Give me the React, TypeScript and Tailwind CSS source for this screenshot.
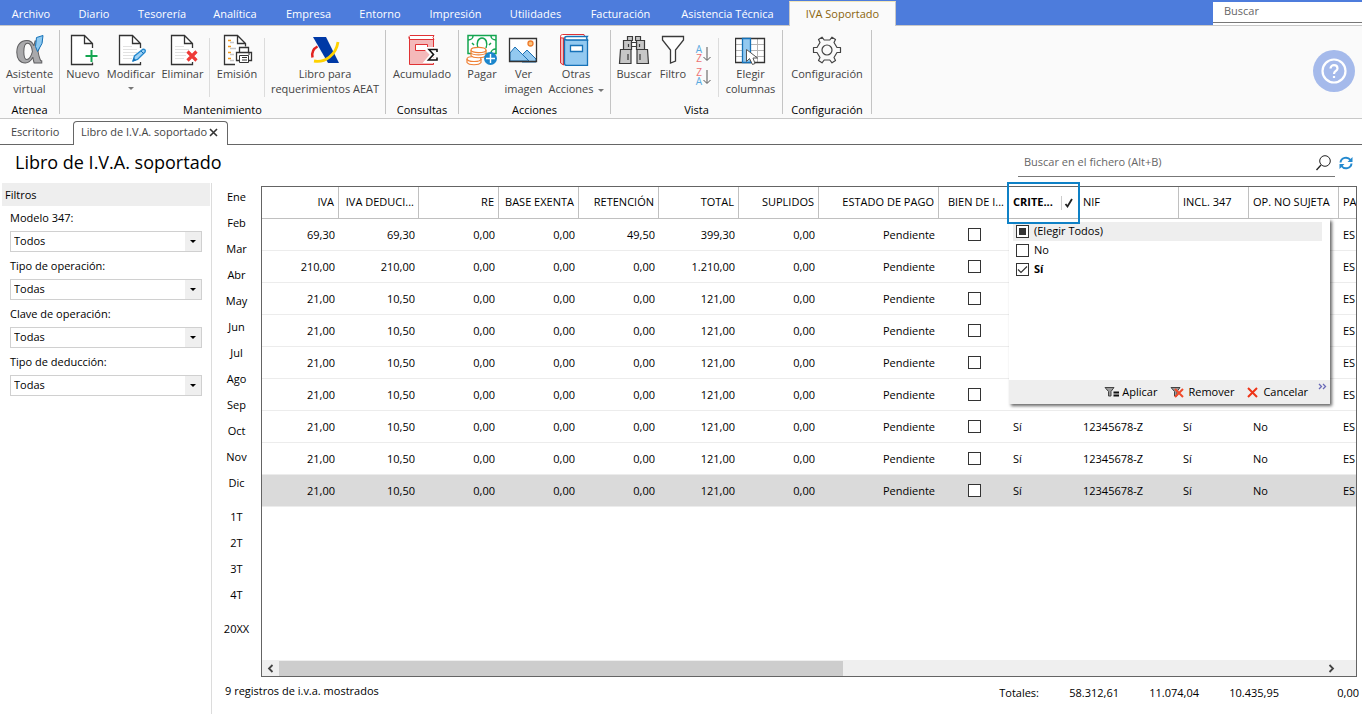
import { ReactNode, useState } from 'react';
import clsx from 'clsx';

const MENU = [
    { label: 'Archivo', width: 'w-[62px]' },
    { label: 'Diario', width: 'w-16' },
    { label: 'Tesorería', width: 'w-[72px]' },
    { label: 'Analítica', width: 'w-[74px]' },
    { label: 'Empresa', width: 'w-[73px]' },
    { label: 'Entorno', width: 'w-[70px]' },
    { label: 'Impresión', width: 'w-[81px]' },
    { label: 'Utilidades', width: 'w-[79px]' },
    { label: 'Facturación', width: 'w-[91px]' },
    { label: 'Asistencia Técnica', width: 'w-[123px]' },
];

const FILTERS = [
    { id: 'modelo', label: 'Modelo 347:', value: 'Todos' },
    { id: 'operacion', label: 'Tipo de operación:', value: 'Todas' },
    { id: 'clave', label: 'Clave de operación:', value: 'Todas' },
    { id: 'deduccion', label: 'Tipo de deducción:', value: 'Todas' },
];

const MONTHS = ['Ene', 'Feb', 'Mar', 'Abr', 'May', 'Jun', 'Jul', 'Ago', 'Sep', 'Oct', 'Nov', 'Dic'];
const QUARTERS = ['1T', '2T', '3T', '4T'];

const COLUMNS = [
    { label: 'IVA', width: 'w-[77px]', right: true },
    { label: 'IVA DEDUCI...', width: 'w-20', right: true },
    { label: 'RE', width: 'w-20', right: true },
    { label: 'BASE EXENTA', width: 'w-20', right: true },
    { label: 'RETENCIÓN', width: 'w-20', right: true },
    { label: 'TOTAL', width: 'w-20', right: true },
    { label: 'SUPLIDOS', width: 'w-20', right: true },
    { label: 'ESTADO DE PAGO', width: 'w-[120px]', right: true },
    { label: 'BIEN DE I...', width: 'w-[70px]', right: true },
    { label: 'CRITE...', width: 'w-[70px]', right: false },
    { label: 'NIF', width: 'w-[100px]', right: false },
    { label: 'INCL. 347', width: 'w-[70px]', right: false },
    { label: 'OP. NO SUJETA', width: 'w-[90px]', right: false },
    { label: 'PA', width: '', right: false },
];

const ROWS = [
    ['69,30', '69,30', '0,00', '0,00', '49,50', '399,30', '0,00'],
    ['210,00', '210,00', '0,00', '0,00', '0,00', '1.210,00', '0,00'],
    ...Array.from({ length: 7 }, () => ['21,00', '10,50', '0,00', '0,00', '0,00', '121,00', '0,00']),
];

const TOTALS = ['58.312,61', '11.074,04', '10.435,95', '0,00'];

/* ---------- Icons ---------- */

function AlphaIcon() {
    return (
        <svg className="overflow-visible" width="32" height="32" viewBox="0 0 32 32">
            <text
                x="1"
                y="29"
                fontFamily="Liberation Serif, serif"
                fontSize="49"
                fontWeight="bold"
                fill="#a9a9ab"
                stroke="#5f5f61"
                strokeWidth="1"
            >
                α
            </text>
            <path d="M22.500 3.500L29 1.500l-1 8-4.500 8-2-5z" fill="#8ec9f0" stroke="#1672b8" />
        </svg>
    );
}

function Page({ lines, children }: { lines?: boolean; children?: ReactNode }) {
    return (
        <svg width="32" height="32" viewBox="0 0 32 32" fill="none">
            <path d="M25.500 30.500H4.500V1.500h13l8 8v21z" fill="#fff" />
            {lines && (
                <path d="M8 12.500h9M8 15.500h14M8 18.500h14M8 21.500h11M8 24.500h9" stroke="#e2e2e2" />
            )}
            <path
                d="M25.500 14V9.500l-8-8h-13v29h21V28M17.500 1.500v8h8"
                stroke="#333"
                strokeWidth="1.300"
            />
            {children}
        </svg>
    );
}

function NewIcon() {
    return (
        <Page>
            <path d="M24.500 15.500v13M18 22h13" stroke="#fff" strokeWidth="5" />
            <path d="M24.500 16v12M18.500 22h12" stroke="#14a550" strokeWidth="2" />
        </Page>
    );
}

function EditIcon() {
    return (
        <Page lines>
            <path d="M18 27l1.500-5 8-6.500c2-1 3.500 1 2.500 2.500l-7.500 7.500z" fill="#9fd2f5" stroke="#2489cf" strokeWidth="1.400" />
            <path d="M18 27l2.500-.8-1.700-1.700zM26 17l2.800 2.800" stroke="#1672b8" fill="#1672b8" />
        </Page>
    );
}

function DeleteIcon() {
    return (
        <Page lines>
            <path d="M20.500 17.500l9 9M29.500 17.500l-9 9" stroke="#fff" strokeWidth="5" />
            <path d="M20.500 17.500l9 9M29.500 17.500l-9 9" stroke="#ee3a37" strokeWidth="3.200" />
        </Page>
    );
}

function PrintIcon() {
    return (
        <svg width="32" height="32" viewBox="0 0 32 32" fill="none" stroke="#333" strokeWidth="1.300">
            <path d="M14 30.500H3.500V1.500h13l8 8v3M16.500 1.500v8h8" fill="#fff" />
            <path d="M7 6.500h3M7 12.500h3M7 18.500h3M7 24.500h3" stroke="#f39a1f" strokeWidth="1.500" />
            <path d="M9 8.500h4M9 14.500h6M9 20.500h4M9 26.500h4" stroke="#c9c9c9" />
            <path d="M18.500 18.500v-5h9v5M18.500 26.500h-3v-8h15v8h-3" fill="#fff" />
            <path d="M18.500 21.500h9v7h-9zM21 23.500h5M21 26h5M27 20h2" fill="#fff" strokeWidth="1" />
        </svg>
    );
}

function AeatIcon() {
    return (
        <svg width="32" height="32" viewBox="0 0 32 32" fill="none">
            <path d="M4 3h13l13 26H19z" fill="#0039a6" />
            <path d="M8.500 12.500c-4 2-6 6-5 11" stroke="#e2231f" strokeWidth="2.500" />
            <path d="M5 27c11 2 22-6 24-19" stroke="#ffd200" strokeWidth="2.800" />
        </svg>
    );
}

function AccumulatedIcon() {
    return (
        <svg width="32" height="32" viewBox="0 0 32 32" fill="none">
            <path d="M3.500 5.500h24v25h-24z" fill="#f4b9ba" stroke="#e03234" />
            <path d="M4 1.500h24l-1 2 1 2H4c-1.500-1-1.500-3 0-4z" fill="#fff" stroke="#e03234" />
            <path d="M3.500 3v27M9.500 10.500h12v6h-12z" stroke="#e03234" fill="#fff" />
            <path d="M31 18v-2.500h-9l5 5-5 6h9V24" stroke="#fff" strokeWidth="5" />
            <path d="M31 18v-2.500h-8l4.500 5-5 5.500h8.500V23.500" stroke="#111" strokeWidth="1.600" />
        </svg>
    );
}

function PayIcon() {
    return (
        <svg width="32" height="32" viewBox="0 0 32 32" fill="none">
            <path d="M2 1.500h28v18H2z" fill="#fff" stroke="#14a550" strokeWidth="1.500" />
            <path
                d="M2 6c3 0 5-2 5-4M30 6c-3 0-5-2-5-4M30 15c-3 0-5 2-5 4M12 14c-2-5 0-10 4-10s6 5 4 10M6 9l2 2M25 9l-2 2"
                stroke="#14a550"
                strokeWidth="1.500"
            />
            <g fill="#fff" stroke="#ef8136" strokeWidth="1.200">
                <path d="M1 25v3.500c2 3 12 3 14 0V25" />
                <ellipse cx="8" cy="25" rx="7" ry="2.500" />
                <path d="M5 16v5.500c2 3 13 3 15 0V16" />
                <path d="M5 19c2 2.500 13 2.500 15 0" />
                <ellipse cx="12.500" cy="16" rx="7.500" ry="2.700" />
            </g>
            <circle cx="24.500" cy="24.500" r="6.500" fill="#1c86cc" />
            <path d="M24.500 20v9M20 24.500h9" stroke="#fff" strokeWidth="1.400" />
        </svg>
    );
}

function PictureIcon() {
    return (
        <svg width="32" height="32" viewBox="1 0 32 32" fill="none">
            <path d="M2.500 4.500h27v23h-27z" fill="#fff" />
            <path d="M15 21l5-5 9 9v3H15z" fill="#93c9f0" stroke="#1c6fb2" />
            <path d="M3 19l5-6 14 14H3z" fill="#93c9f0" stroke="#1c6fb2" />
            <circle cx="23.500" cy="9.500" r="2.500" fill="#fbc37a" stroke="#ee7b2d" strokeWidth="1.300" />
            <path d="M2.500 4.500h27v23h-27z" stroke="#333" strokeWidth="1.300" />
        </svg>
    );
}

function BooksIcon() {
    return (
        <svg width="32" height="32" viewBox="3 0 32 32" fill="none">
            <path d="M3.500 3v26l3 2V3z" fill="#f4b9ba" stroke="#e03234" />
            <path d="M28 4l-1-3.500H5.500c-2.500 0-2.500 3.500-.5 3.500z" fill="#fff" stroke="#e03234" />
            <path d="M7.500 5.500h23v26H10c-2 0-2.500-1-2.500-2z" fill="#93c9f0" stroke="#1672b8" strokeWidth="1.300" />
            <path d="M30.500 2.500H10C7 2.500 7 6 10 6h20.500l-1-2z" fill="#fff" stroke="#1672b8" strokeWidth="1.300" />
            <path d="M13.500 11.500h12v6h-12z" fill="#fff" stroke="#1672b8" strokeWidth="1.300" />
        </svg>
    );
}

function BinocularsIcon() {
    return (
        <svg width="32" height="32" viewBox="0 0 32 32" fill="#c6c6c6" stroke="#3a3a3a" strokeWidth="1.200">
            <path d="M9.500 2.500h5v4h-5zM17.500 2.500h5v4h-5z" />
            <path d="M5.500 6.500h8v9h-8zM18.500 6.500h8v9h-8z" />
            <path d="M13.500 8.500h5v4h-5z" fill="#fff" />
            <path d="M2.500 15.500h10.500v14H1.500zM19 15.500h10.500l1 14H19z" />
            <path d="M10 20v6M22 20v6M10.500 10v3M21.500 10v3" />
        </svg>
    );
}

function FunnelIcon() {
    return (
        <svg width="32" height="32" viewBox="0 0 32 32" fill="#fff" stroke="#3a3a3a" strokeWidth="1.300">
            <path d="M5.500 2.500h21V6l-8 10v11l-5 2V16l-8-10z" />
        </svg>
    );
}

function SortButton({ first, second, label }: { first: 'A' | 'Z'; second: 'A' | 'Z'; label: string }) {
    return (
        <button type="button" aria-label={label} className="flex h-[23px] items-center justify-center text-[10px] leading-[9px]">
            <span className="flex flex-col">
                <span className={first === 'A' ? 'text-[#58a9e0]' : 'text-[#ee7272]'}>{first}</span>
                <span className={second === 'A' ? 'text-[#58a9e0]' : 'text-[#ee7272]'}>{second}</span>
            </span>
            <svg width="9" height="16" viewBox="0 0 9 16">
                <path d="M5 1v13M1.500 11L5 14.500 8.500 11" fill="none" stroke="#555" />
            </svg>
        </button>
    );
}

function ColumnsIcon() {
    return (
        <svg width="32" height="32" viewBox="1 0 32 32" fill="none">
            <path d="M1.500 4.500h29v24h-29z" fill="#fff" />
            <path d="M2 10.500h28M2 16.500h28M2 22.500h28M16.500 5v23M23.500 5v23" stroke="#b5b5b5" />
            <path d="M1.500 4.500h29v24h-29z" stroke="#333" strokeWidth="1.300" />
            <path d="M8.500 4.500h8v24h-8z" fill="#93c9f0" stroke="#1672b8" strokeWidth="1.300" />
            <path d="M12.500 15.500v12l3-3 3 6 2.500-1-2-5.500h4.500z" fill="#fff" stroke="#555" />
        </svg>
    );
}

function GearIcon() {
    return (
        <svg width="32" height="32" viewBox="0 0 32 32" fill="none" stroke="#444" strokeWidth="1.200">
            <path
                strokeLinejoin="round"
                d="M2.500 13.500h3.500L9 8.500 7.500 5.500l3.500-2.300 2.200 2.800h5.600L21 3.200l3.500 2.300L23 8.500l3 5h3.500v5H26l-3 5 1.500 3-3.500 2.300-2.200-2.800h-5.600L11 28.800l-3.500-2.300 1.500-3-3-5H2.500z"
            />
            <circle cx="16" cy="16" r="5" />
        </svg>
    );
}

function SmallFunnel({ removed }: { removed?: boolean }) {
    return (
        <svg width="15" height="14" viewBox="0 0 15 14" fill="none">
            <path d="M1 2.500h9L7 6.500v4.500H4.500V6.500z" fill="#999" stroke="#444" />
            {removed ? (
                <path d="M5 4l8 8M13 4l-8 8" stroke="#f04a2a" strokeWidth="2" />
            ) : (
                <path d="M9.500 7.500H15M9.500 10.500H15" stroke="#111" strokeWidth="1.800" />
            )}
        </svg>
    );
}

/* ---------- Ribbon ---------- */

function Group({ title, children }: { title: string; children: ReactNode }) {
    return (
        <section className="flex flex-col border-r border-[#c4c4c4]">
            <div className="flex flex-1 pt-1">{children}</div>
            <h2 className="h-3 text-center leading-4 text-black">{title}</h2>
        </section>
    );
}

function Tool({ width, icon, lines, caret }: { width: string; icon: ReactNode; lines: string[]; caret?: 'below' | 'inline' }) {
    const arrow = <span className="inline-block border-x-[3px] border-t-[3px] border-x-transparent border-t-[#777]" />;
    return (
        <button type="button" className={clsx('flex flex-col items-center whitespace-nowrap leading-[15px] text-[#444]', width)}>
            {icon}
            <span className="text-center">
                {lines.map((line, i) => (
                    <span key={line} className="block">
                        {line}
                        {caret === 'inline' && i === lines.length - 1 && (
                            <span className="ml-1 inline-flex align-middle">{arrow}</span>
                        )}
                    </span>
                ))}
            </span>
            {caret === 'below' && <span className="flex h-[15px] items-center">{arrow}</span>}
        </button>
    );
}

function Divider() {
    return <span className="mt-1 h-[59px] w-px bg-[#dcdcdc]" />;
}

function Ribbon() {
    return (
        <div className="flex h-[93px] border-b border-[#c8c8c8] bg-[#fafafa] pt-1 pb-1">
            <Group title="Atenea">
                <Tool width="w-[59px]" icon={<AlphaIcon />} lines={['Asistente', 'virtual']} />
            </Group>
            <Group title="Mantenimiento">
                <Tool width="w-[46px]" icon={<NewIcon />} lines={['Nuevo']} />
                <Tool width="w-[50px]" icon={<EditIcon />} lines={['Modificar']} caret="below" />
                <Tool width="w-[53px]" icon={<DeleteIcon />} lines={['Eliminar']} />
                <Divider />
                <Tool width="w-[54px]" icon={<PrintIcon />} lines={['Emisión']} />
                <Divider />
                <Tool width="w-[120px]" icon={<AeatIcon />} lines={['Libro para', 'requerimientos AEAT']} />
            </Group>
            <Group title="Consultas">
                <Tool width="w-[72px]" icon={<AccumulatedIcon />} lines={['Acumulado']} />
            </Group>
            <Group title="Acciones">
                <Tool width="w-[46px]" icon={<PayIcon />} lines={['Pagar']} />
                <Tool width="w-[37px]" icon={<PictureIcon />} lines={['Ver', 'imagen']} />
                <Tool width="w-[68px]" icon={<BooksIcon />} lines={['Otras', 'Acciones']} caret="inline" />
            </Group>
            <Group title="Vista">
                <Tool width="w-[46px]" icon={<BinocularsIcon />} lines={['Buscar']} />
                <Tool width="w-8" icon={<FunnelIcon />} lines={['Filtro']} />
                <div className="flex w-[29px] flex-col items-center pt-2">
                    <SortButton first="A" second="Z" label="Orden ascendente" />
                    <SortButton first="Z" second="A" label="Orden descendente" />
                </div>
                <Divider />
                <Tool width="w-[63px]" icon={<ColumnsIcon />} lines={['Elegir', 'columnas']} />
            </Group>
            <Group title="Configuración">
                <Tool width="w-[88px]" icon={<GearIcon />} lines={['Configuración']} />
            </Group>
            <button
                type="button"
                aria-label="Ayuda"
                className="mt-5 mr-[7px] ml-auto flex size-[42px] items-center justify-center rounded-full bg-[#a5baeb]"
            >
                <svg width="26" height="26" viewBox="0 0 26 26" fill="none" stroke="#fff" strokeWidth="2.200">
                    <circle cx="13" cy="13" r="11.500" />
                    <path d="M9.500 10.500c0-4.500 7-4.500 7 0 0 2.500-3.500 2.500-3.500 5.500" />
                    <path d="M13 18v2" />
                </svg>
            </button>
        </div>
    );
}

/* ---------- Filter menu of the CRITERIO column ---------- */

const box = 'block size-[13px] shrink-0 appearance-none border border-[#333] bg-white';

function FilterMenu() {
    const [no, setNo] = useState(false);
    const [yes, setYes] = useState(true);
    return (
        <div className="absolute top-8 left-0 z-10 flex h-[185px] w-[321px] flex-col bg-white font-normal shadow-[2px_2px_3px_rgba(0,0,0,0.6)]">
            <div className="flex flex-1 flex-col pt-[3px] pr-2 pl-1 text-left">
                <label className="flex h-[19px] items-center gap-[5px] bg-[#eee] pl-[3px]">
                    <span className="relative">
                        <input
                            type="checkbox"
                            checked={no && yes}
                            onChange={(e) => {
                                setNo(e.target.checked);
                                setYes(e.target.checked);
                            }}
                            className={box}
                        />
                        {(no || yes) && <span className="pointer-events-none absolute inset-[3px] bg-[#333]" />}
                    </span>
                    (Elegir Todos)
                </label>
                <label className="flex h-[19px] items-center gap-[5px] pl-[3px]">
                    <input type="checkbox" checked={no} onChange={(e) => setNo(e.target.checked)} className={box} />
                    No
                </label>
                <label className="flex h-[19px] items-center gap-[5px] pl-[3px] font-bold">
                    <span className="relative">
                        <input type="checkbox" checked={yes} onChange={(e) => setYes(e.target.checked)} className={box} />
                        {yes && (
                            <svg className="pointer-events-none absolute inset-0" width="13" height="13" viewBox="0 0 13 13">
                                <path d="M2 6.500l3 3 6-6" fill="none" stroke="#333" strokeWidth="1.200" />
                            </svg>
                        )}
                    </span>
                    Sí
                </label>
            </div>
            <div className="flex h-6 items-center justify-end bg-[#eee] pr-[3px]">
                <div className="flex items-center gap-[13px] pr-[10px]">
                    <button type="button" className="flex items-center gap-[3px]">
                        <SmallFunnel />
                        Aplicar
                    </button>
                    <button type="button" className="flex items-center gap-[3px]">
                        <SmallFunnel removed />
                        Remover
                    </button>
                    <button type="button" className="flex items-center gap-[5px]">
                        <svg width="11" height="11" viewBox="0 0 11 11">
                            <path d="M1 1l9 9M10 1l-9 9" stroke="#ee3417" strokeWidth="2" />
                        </svg>
                        Cancelar
                    </button>
                </div>
                <svg className="mb-3" width="9" height="7" viewBox="0 0 9 7">
                    <path d="M1 1l2.500 2.500L1 6M5 1l2.500 2.500L5 6" fill="none" stroke="#6a6ab8" strokeWidth="1.300" />
                </svg>
            </div>
        </div>
    );
}

/* ---------- Register table ---------- */

function RegisterTable() {
    return (
        <table className="w-full table-fixed border-separate border-spacing-0 whitespace-nowrap text-black">
            <thead>
                <tr className="h-8">
                    {COLUMNS.map(({ label, width, right }) =>
                        label === 'CRITE...' ? (
                            <th key={label} className={clsx('relative border-b border-[#c0c0c0] p-0 text-left font-bold', width)}>
                                <div className="flex items-center pr-[3px] pl-1">
                                    {label}
                                    <svg className="ml-auto" width="15" height="14" viewBox="0 0 15 14" fill="none">
                                        <path d="M.5 0v14" stroke="#ccc" />
                                        <path d="M4.500 8l2 2.500L11 3" stroke="#222" strokeWidth="1.800" />
                                    </svg>
                                </div>
                                <div className="pointer-events-none absolute -top-[5px] -left-[2px] z-20 h-[42px] w-[73px] border-2 border-[#0f81c6]" />
                                <FilterMenu />
                            </th>
                        ) : (
                            <th
                                key={label}
                                className={clsx(
                                    'overflow-hidden border-b border-[#c0c0c0] p-0 font-normal',
                                    width,
                                    width && 'border-r',
                                    right ? 'pr-1 text-right' : 'pl-1 text-left',
                                )}
                            >
                                {label}
                            </th>
                        ),
                    )}
                </tr>
            </thead>
            <tbody>
                {ROWS.map((amounts, i) => (
                    <tr
                        key={i}
                        className={clsx(
                            'h-8 *:overflow-hidden *:border-b *:border-[#ececec] *:px-0 *:pb-0',
                            i === ROWS.length - 1 && 'bg-[#dadada]',
                        )}
                    >
                        {amounts.map((amount, j) => (
                            <td key={j} className="pt-[2px] text-right">
                                <span className="pr-1">{amount}</span>
                            </td>
                        ))}
                        <td className="pt-[2px] text-right">
                            <span className="pr-1">Pendiente</span>
                        </td>
                        <td>
                            <input
                                type="checkbox"
                                aria-label={`Bien de inversión ${i + 1}`}
                                className="mx-auto block size-[13px] appearance-none border border-[#333] bg-white"
                            />
                        </td>
                        <td className="pt-[2px]">
                            <span className="pl-1">Sí</span>
                        </td>
                        <td className="pt-[2px]">
                            <span className="pl-1">12345678-Z</span>
                        </td>
                        <td className="pt-[2px]">
                            <span className="pl-1">Sí</span>
                        </td>
                        <td className="pt-[2px]">
                            <span className="pl-1">No</span>
                        </td>
                        <td className="pt-[2px]">
                            <span className="pl-1">ES</span>
                        </td>
                    </tr>
                ))}
            </tbody>
        </table>
    );
}

function Scrollbar() {
    return (
        <div className="mt-auto flex h-4 items-center bg-[#efefef]">
            <button type="button" aria-label="Desplazar a la izquierda" className="flex w-[17px] justify-center">
                <svg width="7" height="9" viewBox="0 0 7 9">
                    <path d="M5.500 1L2 4.500 5.500 8" fill="none" stroke="#444" strokeWidth="1.800" />
                </svg>
            </button>
            <div className="flex h-[15px] flex-1">
                <div className="w-[54%] bg-[#cdcdcd]" />
            </div>
            <button type="button" aria-label="Desplazar a la derecha" className="mr-4 flex w-[17px] justify-center">
                <svg width="7" height="9" viewBox="0 0 7 9">
                    <path d="M1.500 1L5 4.500 1.500 8" fill="none" stroke="#444" strokeWidth="1.800" />
                </svg>
            </button>
        </div>
    );
}

function Period({ label }: { label: string }) {
    return (
        <button type="button" className="h-[26px] text-center">
            {label}
        </button>
    );
}

export default function App() {
    return (
        <div className="flex min-h-screen flex-col overflow-hidden bg-white font-['Open_Sans','Noto_Sans',sans-serif] text-[11px] text-black">
            {/* Main menu */}
            <header className="flex h-[26px] border-b border-[#c8c8c8] bg-[#4d7cdc] text-white">
                <nav className="flex">
                    {MENU.map(({ label, width }) => (
                        <a key={label} href="#" className={clsx('flex items-center justify-center pt-[3px]', width)}>
                            {label}
                        </a>
                    ))}
                    <a
                        href="#"
                        className="mt-px -mb-px flex w-[107px] items-center justify-center border-x border-t border-[#c8c8c8] border-t-[#f2e6b8] bg-[#fafafa] text-[#8a640c]"
                    >
                        IVA Soportado
                    </a>
                </nav>
                <div className="mt-[2px] ml-auto w-[149px] bg-white">
                    <input
                        aria-label="Buscar"
                        placeholder="Buscar"
                        className="h-[21px] w-full border-b border-[#777] px-[11px] pb-1 outline-none placeholder:text-[#666]"
                    />
                </div>
            </header>

            <Ribbon />

            {/* Open documents */}
            <div className="flex h-[26px] items-end border-b border-[#666] text-[#444]">
                <a href="#" className="flex h-6 w-[73px] items-center pl-[11px]">
                    Escritorio
                </a>
                <div className="-mb-px flex h-6 w-[155px] items-center justify-between rounded-t-[4px] border border-b-0 border-[#666] bg-white pr-[9px] pb-[2px] pl-[7px] whitespace-nowrap">
                    <a href="#">Libro de I.V.A. soportado</a>
                    <button type="button" aria-label="Cerrar">
                        <svg width="9" height="9" viewBox="0 0 9 9">
                            <path d="M1 1l7 7M8 1L1 8" stroke="#333" strokeWidth="1.600" />
                        </svg>
                    </button>
                </div>
            </div>

            {/* Title and search */}
            <div className="flex h-[38px] items-start pr-[9px] pl-[15px]">
                <h1 className="text-lg leading-[34px]">Libro de I.V.A. soportado</h1>
                <div className="mt-1 ml-auto flex h-7 w-[317px] items-center border-b border-[#777] pr-1 pl-1.5">
                    <input
                        aria-label="Buscar en el fichero"
                        placeholder="Buscar en el fichero (Alt+B)"
                        className="flex-1 outline-none placeholder:text-[#666]"
                    />
                    <svg width="15" height="16" viewBox="0 0 15 16" fill="none" stroke="#222">
                        <circle cx="9" cy="6" r="5.300" />
                        <path d="M5 10L.5 15" strokeWidth="1.300" />
                    </svg>
                </div>
                <button type="button" aria-label="Actualizar" className="mt-[11px] ml-1">
                    <svg width="14" height="14" viewBox="0 0 14 14" fill="none" stroke="#2389cf" strokeWidth="2">
                        <path d="M1.500 6.500C2 1.500 8.500 0 11.500 4M12.500 7.500c-.5 5-7 6.500-10 2.500" />
                        <path d="M13.500 1v5h-5zM.5 13V8h5z" fill="#2389cf" stroke="none" />
                    </svg>
                </button>
            </div>

            <main className="flex flex-1">
                {/* Filters */}
                <aside className="w-[212px] shrink-0 border-r border-[#dcdcdc]">
                    <h2 className="mr-px ml-[2px] h-[23px] bg-[#eee] pl-[3px] leading-[24px]">Filtros</h2>
                    <div className="flex flex-col gap-1.5 pt-1 pr-[9px] pl-[10px]">
                        {FILTERS.map(({ id, label, value }) => (
                            <div key={id}>
                                <label htmlFor={id} className="block h-[21px] leading-4">
                                    {label}
                                </label>
                                <div className="relative">
                                    <select
                                        id={id}
                                        className="block h-[21px] w-full appearance-none border border-[#d0d0d0] bg-white pl-[3px]"
                                    >
                                        <option>{value}</option>
                                    </select>
                                    <span className="pointer-events-none absolute inset-y-px right-px flex w-4 items-center justify-center bg-[#efefef]">
                                        <span className="border-x-[3px] border-t-[3px] border-x-transparent border-t-black" />
                                    </span>
                                </div>
                            </div>
                        ))}
                    </div>
                </aside>

                {/* Periods */}
                <nav className="flex w-[49px] shrink-0 flex-col pt-px">
                    {MONTHS.map((month) => (
                        <Period key={month} label={month} />
                    ))}
                    <div className="flex flex-col py-2">
                        {QUARTERS.map((quarter) => (
                            <Period key={quarter} label={quarter} />
                        ))}
                    </div>
                    <Period label="20XX" />
                </nav>

                <div className="-ml-9 flex min-w-0 flex-1 flex-col pt-[3px]">
                    <div className="mr-[5px] ml-9 flex flex-1 flex-col border border-[#646464]">
                        <RegisterTable />
                        <Scrollbar />
                    </div>
                    <footer className="flex h-[37px] items-start justify-between pt-[6px] pr-[3px] leading-4">
                        <span>9 registros de i.v.a. mostrados</span>
                        <dl className="flex pt-[2px]">
                            <dt>Totales:</dt>
                            {TOTALS.map((total) => (
                                <dd key={total} className="w-20 text-right">
                                    {total}
                                </dd>
                            ))}
                        </dl>
                    </footer>
                </div>
            </main>
        </div>
    );
}
